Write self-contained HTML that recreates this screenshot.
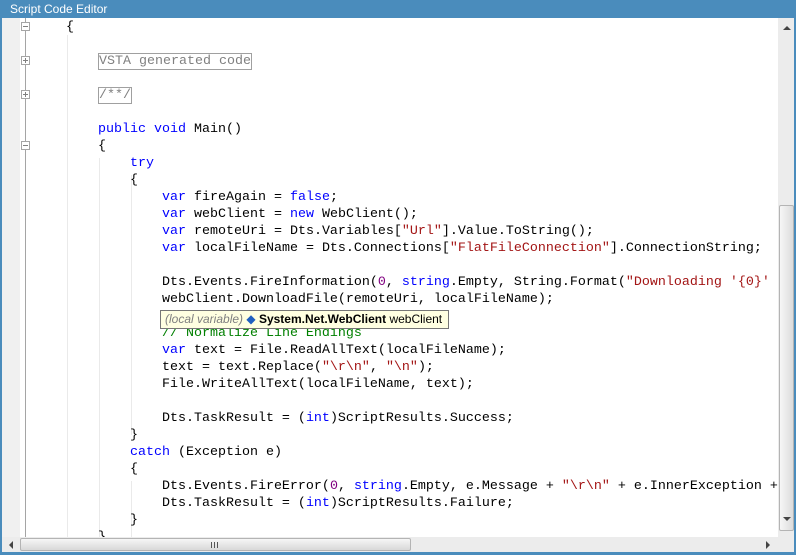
<!DOCTYPE html>
<html><head><style>
*{margin:0;padding:0;box-sizing:border-box}
body{width:796px;height:555px;background:#4a8cbc;position:relative;overflow:hidden;font-family:"Liberation Sans",sans-serif}
.title{position:absolute;left:10px;top:1px;color:#fff;font-size:12px;line-height:16px}
.ed{position:absolute;left:2px;top:18px;width:792px;height:519px;background:#fff;overflow:hidden}
.strip{position:absolute;left:0;top:0;width:18px;height:519px;background:#f0f0f0}
.oline{position:absolute;left:23px;top:0;width:1px;height:519px;background:#a5a5a5}
.mk{position:absolute;left:19px;width:9px;height:9px;border:1px solid #a5a5a5;background:#fff}
.mk:after{content:"";position:absolute;left:1px;top:3px;width:5px;height:1px;background:#808080}
.mk.p:before{content:"";position:absolute;left:3px;top:1px;width:1px;height:5px;background:#808080}
.g{position:absolute;width:1px;background:#eaeaea}
.code{position:absolute;left:0;top:1px;font-family:"Liberation Mono",monospace;font-size:13.33px;line-height:17px;white-space:pre;color:#000}
.r{position:absolute;left:0;height:17px}
.k{color:#0000ff}.s{color:#a31515}.c{color:#008000}.n{color:#800080}
.box{color:#808080;border:1px solid #a0a0a0}
.tip{position:absolute;left:158px;top:292px;width:289px;height:19px;background:#ffffe1;border:1px solid #767676;font-size:12px;line-height:17px;padding-left:4px;white-space:nowrap}
.vs{position:absolute;left:776px;top:0;width:16px;height:519px;background:#ececec}
.vt{position:absolute;left:777px;top:187px;width:15px;height:326px;background:linear-gradient(90deg,#f6f6f6,#dcdcdc);border:1px solid #b4b4b4;border-radius:2px}
.hs{position:absolute;left:2px;top:537px;width:776px;height:15px;background:#ececec}
.ht{position:absolute;left:20px;top:538px;width:391px;height:13px;background:linear-gradient(#f6f6f6,#d8d8d8);border:1px solid #b4b4b4;border-radius:2px}
.corner{position:absolute;left:778px;top:537px;width:16px;height:15px;background:#ececec}
</style></head><body>
<div class="title">Script Code Editor</div>
<div class="ed">
<div class="strip"></div>
<div class="oline"></div>
<div class="mk" style="top:4px"></div>
<div class="mk p" style="top:38px"></div>
<div class="mk p" style="top:72px"></div>
<div class="mk" style="top:123px"></div>
<div class="g" style="left:65px;top:17px;height:502px"></div>
<div class="g" style="left:97px;top:140px;height:379px"></div>
<div class="g" style="left:129px;top:157px;height:260px"></div>
<div class="g" style="left:129px;top:463px;height:56px"></div>
<div class="code">
<div class="r" style="top:0">        {</div>
<div class="r" style="top:34px">            <span class="box">VSTA generated code</span></div>
<div class="r" style="top:68px">            <span class="box">/**/</span></div>
<div class="r" style="top:102px">            <span class="k">public void</span> Main()</div>
<div class="r" style="top:119px">            {</div>
<div class="r" style="top:136px">                <span class="k">try</span></div>
<div class="r" style="top:153px">                {</div>
<div class="r" style="top:170px">                    <span class="k">var</span> fireAgain = <span class="k">false</span>;</div>
<div class="r" style="top:187px">                    <span class="k">var</span> webClient = <span class="k">new</span> WebClient();</div>
<div class="r" style="top:204px">                    <span class="k">var</span> remoteUri = Dts.Variables[<span class="s">"Url"</span>].Value.ToString();</div>
<div class="r" style="top:221px">                    <span class="k">var</span> localFileName = Dts.Connections[<span class="s">"FlatFileConnection"</span>].ConnectionString;</div>
<div class="r" style="top:255px">                    Dts.Events.FireInformation(<span class="n">0</span>, <span class="k">string</span>.Empty, String.Format(<span class="s">"Downloading '{0}'</span></div>
<div class="r" style="top:272px">                    webClient.DownloadFile(remoteUri, localFileName);</div>
<div class="r" style="top:306px">                    <span class="c">// Normalize Line Endings</span></div>
<div class="r" style="top:323px">                    <span class="k">var</span> text = File.ReadAllText(localFileName);</div>
<div class="r" style="top:340px">                    text = text.Replace(<span class="s">"\r\n"</span>, <span class="s">"\n"</span>);</div>
<div class="r" style="top:357px">                    File.WriteAllText(localFileName, text);</div>
<div class="r" style="top:391px">                    Dts.TaskResult = (<span class="k">int</span>)ScriptResults.Success;</div>
<div class="r" style="top:408px">                }</div>
<div class="r" style="top:425px">                <span class="k">catch</span> (Exception e)</div>
<div class="r" style="top:442px">                {</div>
<div class="r" style="top:459px">                    Dts.Events.FireError(<span class="n">0</span>, <span class="k">string</span>.Empty, e.Message + <span class="s">"\r\n"</span> + e.InnerException +</div>
<div class="r" style="top:476px">                    Dts.TaskResult = (<span class="k">int</span>)ScriptResults.Failure;</div>
<div class="r" style="top:493px">                }</div>
<div class="r" style="top:510px">            }</div>
</div>
<div class="tip"><span style="color:#808080;font-style:italic">(local variable)</span> <span style="color:#2060c0">&#9670;</span> <b>System.Net.WebClient</b> webClient</div>
<div class="vs"></div>
<div style="position:absolute;left:781px;top:8px;width:0;height:0;border-left:4px solid transparent;border-right:4px solid transparent;border-bottom:4px solid #444"></div>
<div class="vt"></div>
<div style="position:absolute;left:781px;top:499px;width:0;height:0;border-left:4px solid transparent;border-right:4px solid transparent;border-top:4px solid #444"></div>
</div>
<div class="hs"></div>
<div style="position:absolute;left:9px;top:541px;width:0;height:0;border-top:4px solid transparent;border-bottom:4px solid transparent;border-right:4px solid #444"></div>
<div class="ht"><div style="position:absolute;left:190px;top:3px;width:7px;height:6px;border-left:1px solid #555;border-right:1px solid #555"><div style="margin-left:2px;width:1px;height:6px;background:#555"></div></div></div>
<div style="position:absolute;left:766px;top:541px;width:0;height:0;border-top:4px solid transparent;border-bottom:4px solid transparent;border-left:4px solid #444"></div>
<div class="corner"></div>
</body></html>
